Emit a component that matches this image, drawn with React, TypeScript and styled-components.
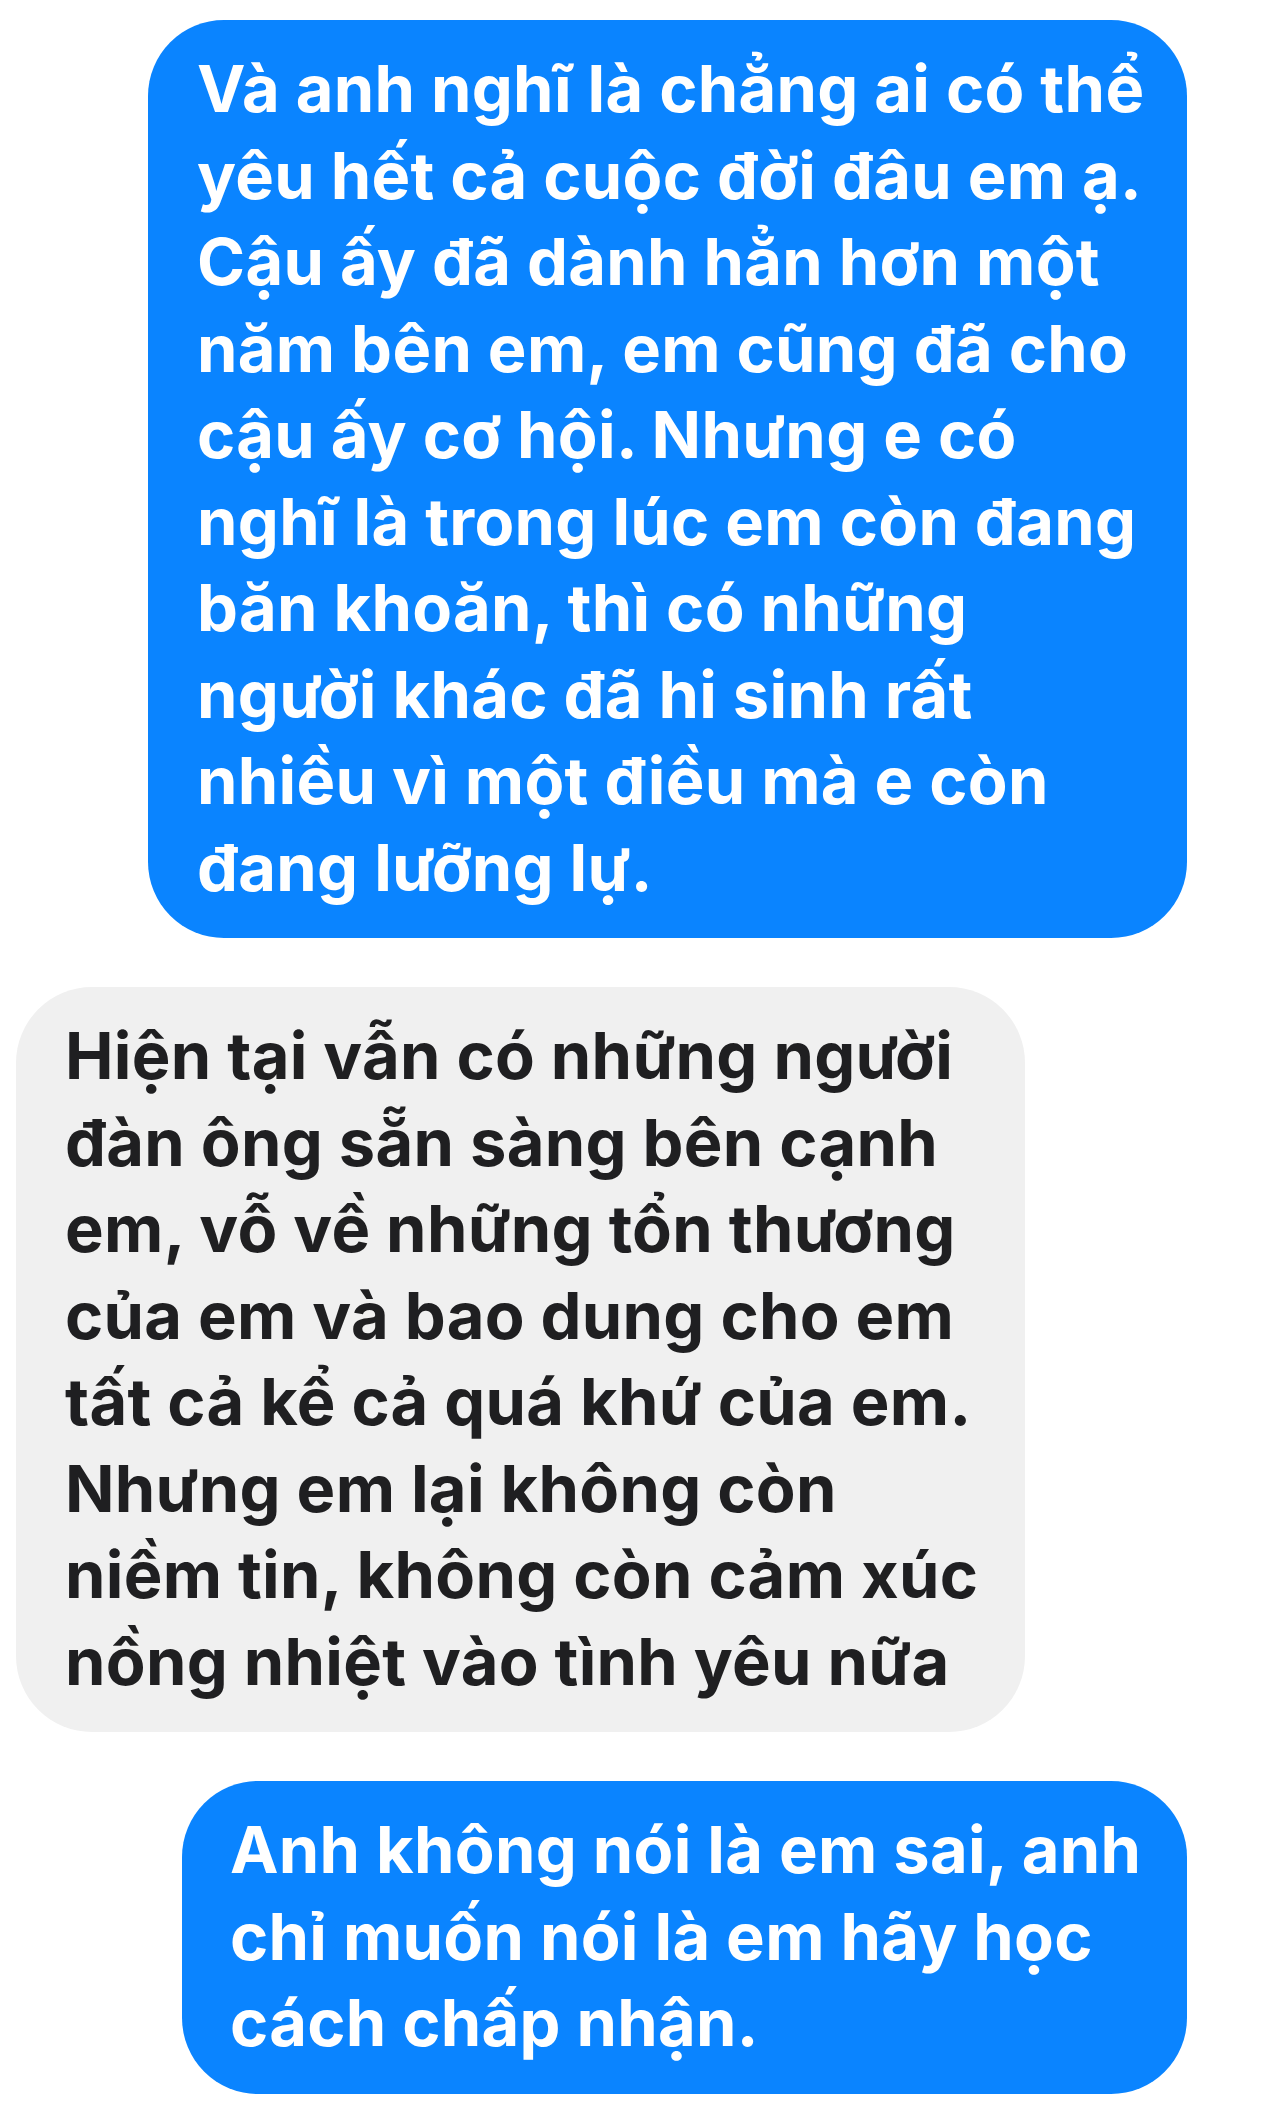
import React from "react";
import styled, { createGlobalStyle } from "styled-components";

const Global = createGlobalStyle`
  html, body {
    margin: 0;
    padding: 0;
    background: #ffffff;
  }
  #root {
    min-height: 2116px;
  }
`;

const Thread = styled.div`
  width: 1280px;
  min-height: 2116px;
  box-sizing: border-box;
  padding: 20px 0 0 0;
  display: flex;
  flex-direction: column;
  gap: 49px;
  font-family: "Inter", "Noto Sans", "Liberation Sans", sans-serif;
`;

const Row = styled.div<{ $side: "left" | "right"; $inset: number }>`
  display: flex;
  justify-content: ${(p) => (p.$side === "right" ? "flex-end" : "flex-start")};
  padding-left: ${(p) => (p.$side === "left" ? p.$inset : 0)}px;
  padding-right: ${(p) => (p.$side === "right" ? p.$inset : 0)}px;
`;

const Bubble = styled.div<{ $kind: "sent" | "received"; $width: number; $padLeft: number }>`
  width: ${(p) => p.$width}px;
  box-sizing: border-box;
  padding: 26px 20px 27px ${(p) => p.$padLeft}px;
  border-radius: 76px;
  background: ${(p) => (p.$kind === "sent" ? "#0a84ff" : "#f0f0f0")};
  color: ${(p) => (p.$kind === "sent" ? "#ffffff" : "#1f1f21")};
  font-size: 65px;
  font-weight: 700;
  line-height: 86.5px;
  letter-spacing: 0.3px;
`;

const Line = styled.span`
  display: block;
  white-space: nowrap;
`;

const messages: {
  kind: "sent" | "received";
  width: number;
  inset: number;
  padLeft: number;
  lines: string[];
}[] = [
  {
    kind: "sent",
    width: 1039,
    inset: 93,
    padLeft: 49,
    lines: [
      "Và anh nghĩ là chẳng ai có thể",
      "yêu hết cả cuộc đời đâu em ạ.",
      "Cậu ấy đã dành hẳn hơn một",
      "năm bên em, em cũng đã cho",
      "cậu ấy cơ hội. Nhưng e có",
      "nghĩ là trong lúc em còn đang",
      "băn khoăn, thì có những",
      "người khác đã hi sinh rất",
      "nhiều vì một điều mà e còn",
      "đang lưỡng lự.",
    ],
  },
  {
    kind: "received",
    width: 1009,
    inset: 16,
    padLeft: 49,
    lines: [
      "Hiện tại vẫn có những người",
      "đàn ông sẵn sàng bên cạnh",
      "em, vỗ về những tổn thương",
      "của em và bao dung cho em",
      "tất cả kể cả quá khứ của em.",
      "Nhưng em lại không còn",
      "niềm tin, không còn cảm xúc",
      "nồng nhiệt vào tình yêu nữa",
    ],
  },
  {
    kind: "sent",
    width: 1005,
    inset: 93,
    padLeft: 48,
    lines: [
      "Anh không nói là em sai, anh",
      "chỉ muốn nói là em hãy học",
      "cách chấp nhận.",
    ],
  },
];

export default function App() {
  return (
    <>
      <Global />
      <Thread>
        {messages.map((m, i) => (
          <Row key={i} $side={m.kind === "sent" ? "right" : "left"} $inset={m.inset}>
            <Bubble $kind={m.kind} $width={m.width} $padLeft={m.padLeft}>
              {m.lines.map((l, j) => (
                <Line key={j}>{l}</Line>
              ))}
            </Bubble>
          </Row>
        ))}
      </Thread>
    </>
  );
}
